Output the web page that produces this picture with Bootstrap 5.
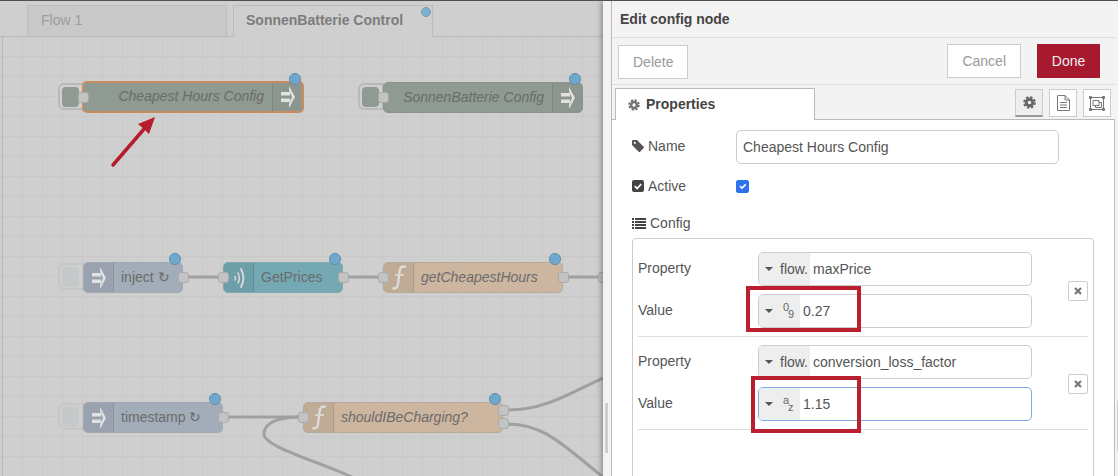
<!DOCTYPE html>
<html lang="en">
<head>
<meta charset="utf-8">
<title>Edit config node</title>
<link rel="stylesheet" href="https://cdn.jsdelivr.net/npm/bootstrap@5.3.0/dist/css/bootstrap.min.css">
<script src="https://cdn.jsdelivr.net/npm/bootstrap@5.3.0/dist/js/bootstrap.bundle.min.js"></script>
<style>
html,body{height:476px;overflow:hidden;}
body{font-family:"Liberation Sans",Arial,sans-serif;font-size:14px;color:#555;background:#f3f3f3;}
.app{width:1118px;height:476px;border-top:1px solid #4f4f4f;position:relative;overflow:hidden;}
/* workspace */
.wsp{width:603px;flex:none;background:#cfcfcf;}
.tabbar{height:36px;flex:none;border-bottom:1px solid #b7b7b7;padding:4px 0 0 27px;gap:6px;}
.ftab{height:31px;width:200px;border:1px solid #bcbcbc;border-bottom:0;line-height:29px;padding-left:13px;background:#c9c9c9;color:#9c9c9c;position:relative;}
.ftab-on{background:#cfcfcf;color:#7c7c7c;font-weight:700;height:32px;margin-bottom:-1px;padding-left:12px;}
.tabdot{position:absolute;right:1px;top:1px;width:10px;height:10px;border-radius:50%;background:#7fb0cf;border:1px solid #6d9dbb;}
.canvasarea{height:439px;position:relative;overflow:hidden;
 background-color:#cfcfcf;
 background-image:linear-gradient(#b9b9b9,#b9b9b9),linear-gradient(90deg,#c9c9c9 1px,transparent 1px),linear-gradient(#c9c9c9 1px,transparent 1px);
 background-size:1px 100%,20px 20px,20px 20px;
 background-repeat:no-repeat,repeat,repeat;
 background-position:2px 0,2px 19px,2px 19px;}
.wires{position:absolute;left:0;top:0;width:603px;height:439px;}
.wire{fill:none;stroke:#a0a0a0;stroke-width:3;}
.fnode{position:absolute;height:31px;border:1px solid #aaa;border-radius:5px;color:#6b6b6b;line-height:29px;display:flex;}
.fnode .ic{width:30px;flex:none;height:100%;display:flex;align-items:center;justify-content:center;border-right:1px solid rgba(0,0,0,.1);background:rgba(0,0,0,.06);border-radius:4px 0 0 4px;}
.fnode .ic-r{border-right:0;border-left:1px solid rgba(0,0,0,.1);border-radius:0 4px 4px 0;background:rgba(0,0,0,.02);}
.fnode .lab{padding-left:7px;white-space:nowrap;}
.fnode .lab-r{padding:0 8px 0 0;margin-left:auto;font-style:italic;}
.fnode .lab-i{font-style:italic;}
.c-config{background:#8f9a92;border-color:#8a948c;}
.c-sel{border:2px solid #c98c60;line-height:27px;}
.c-inject{background:#a3adb9;border-color:#a0a8b0;}
.c-http{background:#74a9b4;border-color:#83a8ae;}
.c-fn{background:#cdb69f;border-color:#b5aa9c;}
.fport{position:absolute;width:11px;height:11px;border-radius:3px;background:#c3c3c3;border:1px solid #aaa;}
.fdot{position:absolute;width:12px;height:12px;border-radius:50%;background:#6fa8cf;border:1px solid #5d8ca8;}
.fbtn{position:absolute;width:26px;height:27px;border:2px solid #b9b9b9;border-radius:6px 0 0 6px;background:#cfcfcf;padding:2px;}
.fbtn i{display:block;width:17px;height:20px;background:#8f9a92;border-radius:4px;}
.fbtn-pale{border-color:#c6c6c6;}
.fbtn-pale i{background:#c5c9ca;}
.n1{left:82px;top:44px;width:222px;height:32px;}
.n2{left:383px;top:45px;width:200px;}
.n3{left:83px;top:225px;width:100px;}
.n4{left:223px;top:225px;width:120px;}
.n5{left:383px;top:225px;width:180px;}
.n6{left:83px;top:365px;width:140px;}
.n7{left:303px;top:365px;width:200px;}
.b1{left:58px;top:46px;}.b2{left:358px;top:46px;}.b3{left:58px;top:226px;}.b4{left:58px;top:366px;}
.p1{left:78px;top:55px;}.p2{left:378px;top:55px;}
.p3{left:178px;top:235px;}.p4{left:218px;top:235px;}.p5{left:338px;top:235px;}.p6{left:378px;top:235px;}.p7{left:558px;top:235px;}.p8{left:598px;top:235px;}
.p9{left:218px;top:375px;}.p10{left:298px;top:375px;}.p11{left:498px;top:368px;}.p12{left:498px;top:381px;}
.d1{left:289px;top:36px;}.d2{left:569px;top:36px;}.d3{left:169px;top:216px;}.d4{left:329px;top:216px;}.d5{left:549px;top:216px;}.d6{left:209px;top:356px;}.d7{left:489px;top:356px;}
.arrow{position:absolute;left:100px;top:70px;width:70px;height:70px;}
/* tray */
.tray{flex:1;min-width:0;position:relative;box-shadow:-2px 0 5px rgba(0,0,0,.3);background:#f3f3f3;}
.grip{width:8px;flex:none;position:relative;}
.gripbar{position:absolute;left:2px;top:402px;width:3px;height:50px;background:#cfcfcf;}
.traymain{flex:1;min-width:0;border-left:1px solid #bbb;margin-right:3px;position:relative;}
.trayhead{height:37px;border-bottom:1px solid #dcdcdc;padding-left:8px;line-height:36px;font-weight:700;color:#444;}
.traybtns{height:47px;border-bottom:1px solid #dcdcdc;padding:6px 15px 0 6px;}
.bbtn{height:34px;border:1px solid #ccc;background:#fff;color:#999;font-size:14px;border-radius:0;padding:0 14px;line-height:32px;}
.bbtn:hover{background:#fff;color:#999;border-color:#ccc;}
.bdel{margin-top:1px;}
.bdone{background:#a6192e;border-color:#a6192e;color:#eee;margin-left:16px;padding:0;width:63px;}
.bdone:hover{background:#a6192e;border-color:#a6192e;color:#eee;}
.traytabs{height:35px;border-bottom:1px solid #bbb;padding:3px 4px 0 3px;}
.ptab{width:200px;height:32px;background:#fff;border:1px solid #bbb;border-bottom:0;margin-bottom:-1px;font-weight:700;color:#444;padding-left:12px;gap:6px;}
.sgroup{gap:6px;}
.sbtn{width:28px;height:28px;background:#fff;border:1px solid #ccc;margin-top:1px;padding:0;display:flex;align-items:center;justify-content:center;border-radius:0;}
.sbtn:hover{background:#fff;border-color:#ccc;}
.sbtn-on,.sbtn-on:hover{background:#eee;border-bottom:2px solid #999;}
.trayform{background:#fff;height:356px;border-right:1px solid #bbb;padding:10px 20px 0 20px;overflow:hidden;}
.lbl{width:104px;flex:none;gap:4px;color:#555;}
.lbl-up{margin-top:-2px;}
.fc{width:323px;height:34px;border:1px solid #ccc;border-radius:5px;color:#555;font-size:14px;padding:0 6px;}
.fc:focus{border-color:#ccc;box-shadow:none;color:#555;}
.rowname{height:34px;}
.rowact{margin-top:15px;height:14px;}
.form-check-input.chk{width:13px;height:13px;margin:0;border-radius:2px;background-color:#2f72ee;border-color:#2f72ee;}
.rowcfg{margin-top:21px;height:18px;line-height:18px;gap:4px;}
.cfgbox{margin-top:6px;width:462px;height:300px;border:1px solid #ccc;border-radius:4px;padding:5px 5px 0;}
.crow{padding:8px 0;border-bottom:1px solid #ddd;}
.cfields{width:394px;gap:8px;}
.cl{width:120px;flex:none;margin-top:-2px;}
.ti{width:274px;height:34px;border:1px solid #ccc;border-radius:5px;overflow:hidden;background:#fff;}
.ti-on{border-color:#7fa9e0;}
.tisel{background:#eee;height:100%;flex:none;padding-left:6px;gap:7px;}
.tisel-a{width:51px;}
.tisel-b{width:41px;}
.caret8{width:0;height:0;border:4px solid transparent;border-top:4px solid #555;margin-top:4px;}
.tival{padding-left:3px;color:#555;}
.tystack{position:relative;width:14px;height:20px;font-size:11px;line-height:9px;color:#666;margin-left:2px;}
.tystack b{font-weight:400;position:absolute;left:1px;top:2px;}
.tystack u{text-decoration:none;position:absolute;left:6px;top:9px;}
.xbtn{width:20px;height:20px;border:1px solid #ccc;border-radius:2px;background:#fff;margin-left:auto;padding:0;display:flex;align-items:center;justify-content:center;margin-top:2px;}
.sidebar-line{position:absolute;right:0;top:400px;width:1px;height:50px;background:#d0d0d0;}
.redbox{position:absolute;border:4px solid #bb1e2e;pointer-events:none;}
.rb1{left:746px;top:285px;width:115px;height:46px;}
.rb2{left:751px;top:375px;width:110px;height:57px;}
</style>
</head>
<body>
<div class="app d-flex">
  <div class="wsp d-flex flex-column">
    <div class="tabbar d-flex">
      <div class="ftab">Flow 1</div>
      <div class="ftab ftab-on">SonnenBatterie Control<span class="tabdot"></span></div>
    </div>
    <div class="canvasarea">
      <svg class="wires" viewBox="0 0 603 439" aria-hidden="true">
        <path class="wire" d="M188 240H218M348 240H378M568 240H598M228 380H298"/>
        <path class="wire" d="M298 380C275 381 264 387 264 397C264 410 320 425 352 440"/>
        <path class="wire" d="M508 373C545 373 570 356 603 341"/>
        <path class="wire" d="M508 387C545 387 565 410 603 440"/>
      </svg>

      <div class="fbtn b1"><i></i></div>
      <div class="fnode c-config c-sel n1"><span class="lab lab-r">Cheapest Hours Config</span><span class="ic ic-r"><svg width="14" height="22" viewBox="0 0 14 22"><path fill="#e2e2e2" d="M0 6h9v3.500H0zM0 12.500h9V16H0zM8 0l6 11-6 11v-4l3-7-3-7z"/></svg></span></div>
      <div class="fport p1"></div><div class="fdot d1"></div>

      <div class="fbtn b2"><i></i></div>
      <div class="fnode c-config n2"><span class="lab lab-r">SonnenBatterie Config</span><span class="ic ic-r"><svg width="14" height="22" viewBox="0 0 14 22"><path fill="#e2e2e2" d="M0 6h9v3.500H0zM0 12.500h9V16H0zM8 0l6 11-6 11v-4l3-7-3-7z"/></svg></span></div>
      <div class="fport p2"></div><div class="fdot d2"></div>

      <div class="fbtn fbtn-pale b3"><i></i></div>
      <div class="fnode c-inject n3"><span class="ic"><svg width="14" height="22" viewBox="0 0 14 22"><path fill="#e2e2e2" d="M0 6h9v3.500H0zM0 12.500h9V16H0zM8 0l6 11-6 11v-4l3-7-3-7z"/></svg></span><span class="lab">inject ↻</span></div>
      <div class="fport p3"></div><div class="fdot d3"></div>

      <div class="fnode c-http n4"><span class="ic"><svg width="20" height="26" viewBox="0 0 20 26" fill="none" stroke="#dcdcdc" stroke-linecap="round"><path stroke-width="1.500" d="M6 11.500c.7 1 .7 2.500 0 3.500"/><path stroke-width="1.500" d="M9 8c1.600 3 1.600 7 0 10"/><path stroke-width="1.800" d="M12 4c3 5.500 3 12.500 0 18"/></svg></span><span class="lab">GetPrices</span></div>
      <div class="fport p4"></div><div class="fport p5"></div><div class="fdot d4"></div>

      <div class="fnode c-fn n5"><span class="ic"><svg width="20" height="28" viewBox="0 0 20 28" fill="none" stroke="#dcdcdc" stroke-width="2.400"><path d="M17 3c-5-1.500-6 1-6.500 5l-1.500 12c-.5 4-2 5-5.500 4"/><path stroke-width="1.600" d="M6 11h9"/></svg></span><span class="lab lab-i">getCheapestHours</span></div>
      <div class="fport p6"></div><div class="fport p7"></div><div class="fport p8"></div><div class="fdot d5"></div>

      <div class="fbtn fbtn-pale b4"><i></i></div>
      <div class="fnode c-inject n6"><span class="ic"><svg width="14" height="22" viewBox="0 0 14 22"><path fill="#e2e2e2" d="M0 6h9v3.500H0zM0 12.500h9V16H0zM8 0l6 11-6 11v-4l3-7-3-7z"/></svg></span><span class="lab">timestamp ↻</span></div>
      <div class="fport p9"></div><div class="fdot d6"></div>

      <div class="fnode c-fn n7"><span class="ic"><svg width="20" height="28" viewBox="0 0 20 28" fill="none" stroke="#dcdcdc" stroke-width="2.400"><path d="M17 3c-5-1.500-6 1-6.500 5l-1.500 12c-.5 4-2 5-5.500 4"/><path stroke-width="1.600" d="M6 11h9"/></svg></span><span class="lab lab-i">shouldIBeCharging?</span></div>
      <div class="fport p10"></div><div class="fport p11"></div><div class="fport p12"></div><div class="fdot d7"></div>

      <svg class="arrow" viewBox="0 0 70 70" aria-hidden="true"><path d="M13 58L44 22" stroke="#b71c2c" stroke-width="3.500" stroke-linecap="round"/><path fill="#b71c2c" d="M55 10L49 27 44 22 38 17z"/></svg>
    </div>
  </div>

  <div class="tray d-flex">
    <div class="grip"><div class="gripbar"></div></div>
    <div class="traymain d-flex flex-column">
      <div class="trayhead">Edit config node</div>
      <div class="traybtns d-flex align-items-start">
        <button type="button" class="btn bbtn bdel">Delete</button>
        <button type="button" class="btn bbtn ms-auto">Cancel</button>
        <button type="button" class="btn bbtn bdone">Done</button>
      </div>
      <div class="traytabs d-flex">
        <div class="ptab d-flex align-items-center">
          <svg width="12" height="12" viewBox="0 0 16 16"><circle cx="8" cy="8" r="4" fill="none" stroke="#777" stroke-width="3.500"/><circle cx="8" cy="8" r="6.500" fill="none" stroke="#777" stroke-width="2.500" stroke-dasharray="3 2.100"/></svg>
          Properties
        </div>
        <div class="d-flex ms-auto sgroup">
          <button type="button" class="btn sbtn sbtn-on" aria-label="Properties"><svg width="13" height="13" viewBox="0 0 16 16"><circle cx="8" cy="8" r="4" fill="none" stroke="#666" stroke-width="3.500"/><circle cx="8" cy="8" r="6.500" fill="none" stroke="#666" stroke-width="2.500" stroke-dasharray="3 2.100"/></svg></button>
          <button type="button" class="btn sbtn" aria-label="Description"><svg width="13" height="16" viewBox="0 0 13 16" fill="none" stroke="#777"><path d="M1.500.5h6.500l4.500 4.500v10.500H.5V.5z"/><path d="M8 .5v4.500h4.500M3 7.500h7M3 10h7M3 12.500h7"/></svg></button>
          <button type="button" class="btn sbtn" aria-label="Appearance"><svg width="16" height="15" viewBox="0 0 16 15" fill="none" stroke="#777"><path d="M2 1.500h12M2 13.500h12M1.500 2v11M14.500 2v11"/><path d="M4 4.500h6v5H4zM6.500 9.500v2h6v-5h-2.500"/><path fill="#777" d="M.5.500h2v2h-2zM13.500.500h2v2h-2zM.5 12.500h2v2h-2zM13.500 12.500h2v2h-2z"/></svg></button>
        </div>
      </div>
      <div class="trayform">
        <div class="rowname d-flex align-items-center">
          <div class="lbl lbl-up d-flex align-items-center"><svg width="12" height="12" viewBox="0 0 12 12"><path fill="#555" fill-rule="evenodd" d="M0 1a1 1 0 0 1 1-1h4l6.700 6.700a1 1 0 0 1 0 1.400l-3.600 3.600a1 1 0 0 1-1.400 0L0 5zM2.800 1.700a1.100 1.100 0 1 0 0 2.200 1.100 1.100 0 0 0 0-2.200z"/></svg>Name</div>
          <input class="form-control fc" type="text" value="Cheapest Hours Config" aria-label="Name">
        </div>
        <div class="rowact d-flex align-items-center">
          <div class="lbl d-flex align-items-center"><svg width="12" height="12" viewBox="0 0 12 12"><rect width="12" height="12" rx="2" fill="#444"/><path d="M2.800 6.200l2.300 2.300 4.200-4.500" fill="none" stroke="#fff" stroke-width="1.700"/></svg><span>Active</span></div>
          <input class="form-check-input chk" type="checkbox" checked aria-label="Active">
        </div>
        <div class="rowcfg d-flex align-items-center">
          <svg width="14" height="12" viewBox="0 0 14 12"><path fill="#444" d="M0 1h2v2H0zM3 1h11v2H3zM0 4h2v2H0zM3 4h11v2H3zM0 7h2v2H0zM3 7h11v2H3zM0 10h2v2H0zM3 10h11v2H3z"/></svg>
          <span>Config</span>
        </div>
        <div class="cfgbox">
          <div class="crow d-flex align-items-center">
            <div class="cfields d-flex flex-column">
              <div class="d-flex align-items-center"><span class="cl">Property</span><div class="ti d-flex align-items-center"><span class="tisel tisel-a d-flex align-items-center"><i class="caret8"></i>flow.</span><span class="tival">maxPrice</span></div></div>
              <div class="d-flex align-items-center"><span class="cl">Value</span><div class="ti d-flex align-items-center"><span class="tisel tisel-b d-flex align-items-center"><i class="caret8"></i><span class="tystack"><b>0</b><u>9</u></span></span><span class="tival">0.27</span></div></div>
            </div>
            <button type="button" class="xbtn" aria-label="Remove"><svg width="8" height="8" viewBox="0 0 8 8"><path d="M1 1l6 6M7 1L1 7" stroke="#777" stroke-width="2.200"/></svg></button>
          </div>
          <div class="crow d-flex align-items-center">
            <div class="cfields d-flex flex-column">
              <div class="d-flex align-items-center"><span class="cl">Property</span><div class="ti d-flex align-items-center"><span class="tisel tisel-a d-flex align-items-center"><i class="caret8"></i>flow.</span><span class="tival">conversion_loss_factor</span></div></div>
              <div class="d-flex align-items-center"><span class="cl">Value</span><div class="ti ti-on d-flex align-items-center"><span class="tisel tisel-b d-flex align-items-center"><i class="caret8"></i><span class="tystack"><b>a</b><u>z</u></span></span><span class="tival">1.15</span></div></div>
            </div>
            <button type="button" class="xbtn" aria-label="Remove"><svg width="8" height="8" viewBox="0 0 8 8"><path d="M1 1l6 6M7 1L1 7" stroke="#777" stroke-width="2.200"/></svg></button>
          </div>
        </div>
      </div>
    </div>
    <div class="sidebar-line"></div>
  </div>
  <div class="redbox rb1"></div>
  <div class="redbox rb2"></div>
</div>
</body>
</html>
